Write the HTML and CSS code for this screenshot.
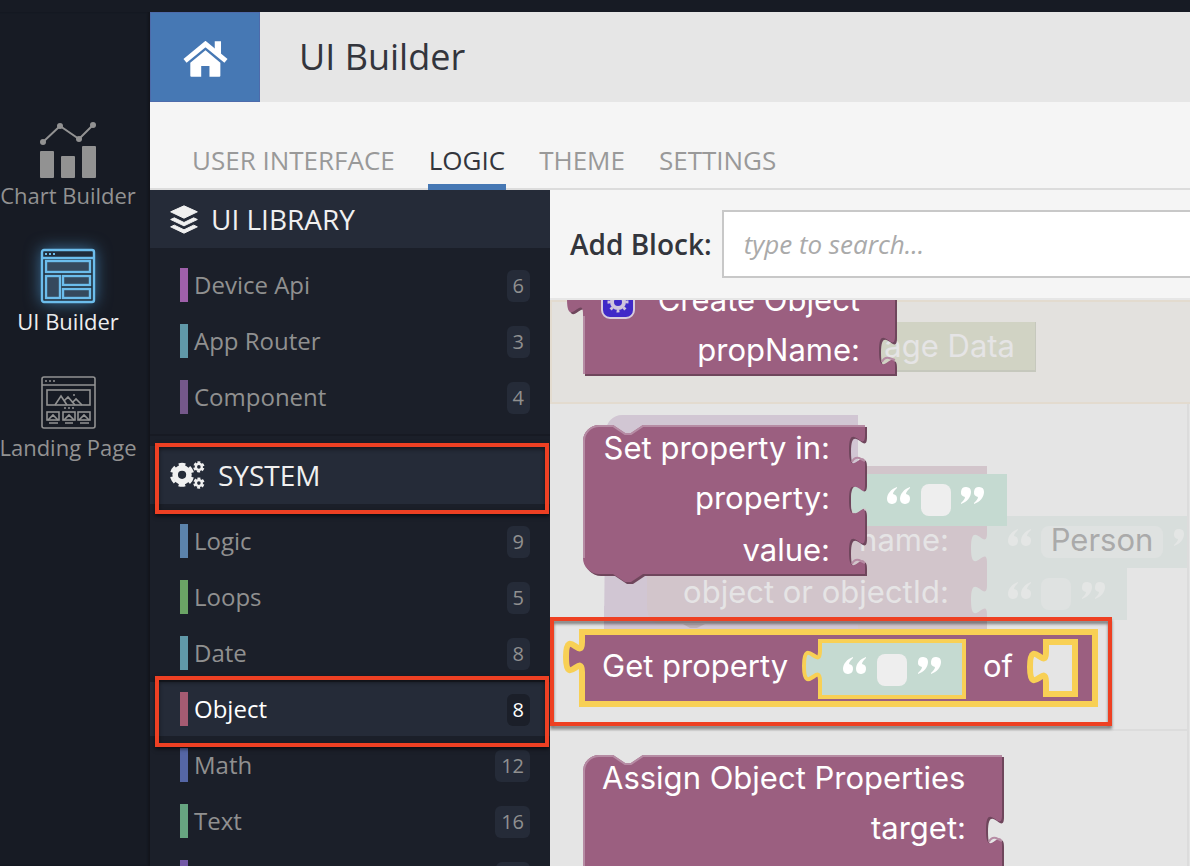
FILE: index.html
```html
<!DOCTYPE html>
<html lang="en">
<head>
<meta charset="utf-8">
<title>UI Builder</title>
<link rel="stylesheet" href="styles.css">
</head>
<body>
<div class="app">
  <nav class="rail" aria-label="Builders">
    <a class="rail-item" href="#chart">
      <svg class="rail-icon" viewBox="0 0 56 56" aria-hidden="true">
        <g fill="currentColor"><rect y="29" width="14" height="27" rx="1"/><rect x="21" y="34" width="14" height="22" rx="1"/><rect x="42" y="24" width="14" height="32" rx="1"/><circle cx="3" cy="20" r="3"/><circle cx="20" cy="4" r="3"/><circle cx="39" cy="17" r="3"/><circle cx="53" cy="3" r="3"/></g>
        <path d="M3 20 20 4 39 17 53 3" fill="none" stroke="currentColor" stroke-width="2"/>
      </svg>
      <span>Chart Builder</span>
    </a>
    <a class="rail-item is-active" href="#ui">
      <svg class="rail-icon" viewBox="0 0 56 56" aria-hidden="true">
        <g fill="#35495d" stroke="#6cbdec" stroke-width="2.4">
          <rect x="2" y="2" width="52" height="52" rx="2" fill="#202c3a"/>
          <path d="M2 10H54"/>
          <rect x="6" y="13" width="44" height="11"/><rect x="6" y="28" width="14" height="22"/><rect x="23" y="28" width="27" height="9"/><rect x="23" y="41" width="27" height="9"/>
        </g>
        <path d="M5 6h2m2 0h2m2 0h2" stroke="#6cbdec" stroke-width="2"/>
      </svg>
      <span>UI Builder</span>
    </a>
    <a class="rail-item" href="#landing">
      <svg class="rail-icon" viewBox="0 0 56 56" aria-hidden="true">
        <g fill="none" stroke="currentColor" stroke-width="1.6">
          <rect x="2" y="3" width="53" height="51" rx="2"/>
          <path d="M2 11H55M5 7h2m2 0h2m2 0h2M24 34h2m2 0h2m2 0h2"/>
          <rect x="7" y="16" width="43" height="15"/>
          <path d="M15 31l6-9 6 9M24 27l4-4 7 8M32 29l4-4 6 6M33 21h2"/>
          <rect x="7" y="38" width="12" height="8"/><rect x="23" y="38" width="12" height="8"/><rect x="38" y="38" width="12" height="8"/>
          <path d="M8 46l5-5 5 5M24 46l5-5 5 5M39 46l5-5 5 5M9 49h9M25 49h8M40 49h9"/>
        </g>
      </svg>
      <span>Landing Page</span>
    </a>
  </nav>

  <div class="main">
    <header class="topbar">
      <a class="home" href="#home" aria-label="Home">
        <svg class="home-icon" viewBox="546 122 136 109" aria-hidden="true">
          <path d="M552 182 614 131 676 182" fill="none" stroke="#fff" stroke-width="15"/>
          <path d="M642 123h19v40l-19-15zM614 150l45 38v39q0 3-3 3h-30v-32h-25v32h-30q-3 0-3-3v-39z" fill="#fff"/>
        </svg>
      </a>
      <h1 class="title">UI Builder</h1>
    </header>

    <nav class="tabs" aria-label="Sections">
      <a class="tab" href="#user-interface">USER INTERFACE</a>
      <a class="tab is-active" href="#logic">LOGIC</a>
      <a class="tab" href="#theme">THEME</a>
      <a class="tab" href="#settings">SETTINGS</a>
    </nav>

    <div class="body">
      <aside class="library">
        <section class="group">
          <h2 class="group-head">
            <svg class="layers" viewBox="510 615 84 86" aria-hidden="true"><g fill="#f0f0f0" stroke="#f0f0f0" stroke-width="3" stroke-linejoin="round"><path d="M552 617 592 635 552 654 512 635zM512 658 523 653 552 667 581 653 592 658 552 677zM512 680 523 675 552 689 581 675 592 680 552 699z"/></g></svg>
            UI LIBRARY
          </h2>
          <ul class="list">
            <li><a class="row violet" href="#device-api"><span class="name">Device Api</span><span class="count">6</span></a></li>
            <li><a class="row teal" href="#app-router"><span class="name">App Router</span><span class="count">3</span></a></li>
            <li><a class="row plum" href="#component"><span class="name">Component</span><span class="count">4</span></a></li>
          </ul>
        </section>
        <section class="group">
          <h2 class="group-head marked">
            <svg class="cogs" viewBox="60 94 105 85" aria-hidden="true">
              <g fill="none" stroke="#f0f0f0">
                <circle cx="96" cy="136" r="21" stroke-width="17"/><circle cx="96" cy="136" r="32" stroke-width="9" pathLength="60" stroke-dasharray="6 4" transform="rotate(-108 96 136)"/>
                <circle cx="147" cy="112" r="9" stroke-width="7"/><circle cx="147" cy="112" r="14" stroke-width="6" pathLength="60" stroke-dasharray="6 4" transform="rotate(-108 147 112)"/>
                <circle cx="147" cy="161" r="9" stroke-width="7"/><circle cx="147" cy="161" r="14" stroke-width="6" pathLength="60" stroke-dasharray="6 4" transform="rotate(-108 147 161)"/>
              </g>
            </svg>
            SYSTEM
          </h2>
          <ul class="list">
            <li><a class="row blue" href="#logic-blocks"><span class="name">Logic</span><span class="count">9</span></a></li>
            <li><a class="row green" href="#loops"><span class="name">Loops</span><span class="count">5</span></a></li>
            <li><a class="row teal" href="#date"><span class="name">Date</span><span class="count">8</span></a></li>
            <li><a class="row rose is-active marked" href="#object"><span class="name">Object</span><span class="count">8</span></a></li>
            <li><a class="row indigo" href="#math"><span class="name">Math</span><span class="count">12</span></a></li>
            <li><a class="row mint" href="#text"><span class="name">Text</span><span class="count">16</span></a></li>
            <li><div class="row purple"><span class="name"></span><span class="count"></span></div></li>
          </ul>
        </section>
      </aside>

      <main class="editor">
        <form class="search">
          <label class="search-label" for="block-search">Add Block:</label>
          <input class="search-input" id="block-search" type="text" placeholder="type to search...">
        </form>
        <div class="workspace">
          <svg class="canvas" role="img" aria-label="Block workspace">
            <defs>
              <g id="quote-open"><path d="M10 0C4 2 0 7 0 12a5 5 0 1 0 6-5C6 5 8 3 10 1zM23 0c-6 2-10 7-10 12a5 5 0 1 0 6-5c0-2 2-4 4-6z"/></g>
              <g id="quote-close"><path d="M1 17c6-2 10-7 10-12a5 5 0 1 0-6 5c0 2-2 4-4 6zM14 17c6-2 10-7 10-12a5 5 0 1 0-6 5c0 2-2 4-4 6z"/></g>
              <filter id="mark-shadow" x="-5%" y="-10%" width="110%" height="130%"><feDropShadow dx="0" dy="3" stdDeviation="1.5" flood-opacity="0.45"/></filter>
              <path id="create-shape" d="M583 274H895V336c0 20-16-16-16 15s16-5 16 15V374H583V314c0-20-16 16-16-15s16 5 16-15z"/>
              <path id="set-shape" d="M583 441a16 16 0 0 1 16-16H613l12 8h6l12-8H865v10c0 20-16-16-16 15s16-5 16 15V485c0 20-16-16-16 15s16-5 16 15V537c0 20-16-16-16 15s16-5 16 15v7H643l-12 8h-6l-12-8H599a16 16 0 0 1-16-16z"/>
              <path id="assign-shape" d="M583 771a16 16 0 0 1 16-16H613l12 8h6l12-8H1002V815c0 20-16-16-16 15s16-5 16 15V1000H583z"/>
            </defs>
            <g transform="translate(-550 -300)">
              <g class="faded">
                <rect x="551" y="301" width="100%" height="102" fill="#e3e1de" stroke="#e3dbcf" stroke-width="2"/>
                <rect x="870" y="322" width="166" height="50" fill="#c6c8bd"/>
                <rect x="870" y="322" width="165" height="48" fill="#d1d3c4"/>
                <path d="M606 431a16 16 0 0 1 16-16H858V632H604z" fill="#d1c6d3"/>
                <path d="M647 466H987V640H671q-24-2-24-34z" fill="#d2c5cb"/>
                <path d="M647 606q0 20 18 18H858V632H604V606z" fill="#d1c6d3"/>
                <path d="M647 580H987V624H663q-16-3-16-24z" fill="#d2c5cb"/>
                <path d="M683 624h22l-8 4h-7z" fill="#bcb0b6"/>
                <path d="M987 516H1187V568H1127V620H987V615c0-20-16 16-16-15s16 5 16-15V563c0-20-16 16-16-15s16 5 16-15z" fill="#d8dedc"/>
                <rect x="1041" y="526" width="122" height="32" rx="8" fill="#dfe2e1"/>
                <rect x="1041" y="578" width="30" height="32" rx="8" fill="#dfe2e1"/>
                <g fill="#e4e6e5"><use href="#quote-open" x="1008" y="529"/><use href="#quote-close" x="1173" y="529"/><use href="#quote-open" x="1008" y="582"/><use href="#quote-close" x="1081" y="582"/></g>
                <text x="1015" y="357" text-anchor="end">age Data</text>
                <text x="949" y="551" text-anchor="end">name:</text>
                <text x="949" y="603" text-anchor="end">object or objectId:</text>
                <text class="value" x="1102" y="551" text-anchor="middle">Person</text>
                <path d="M1188 404V900M550 730H1188" fill="none" stroke="#dcdcdc" stroke-width="2"/>
              </g>

              <g class="block">
                <use class="edge" href="#create-shape" x="2" y="2"/>
                <use href="#create-shape"/>
                <path class="shine" d="M584 374V316M882 362q2-5 7-4l6 2"/>
                <rect x="602" y="286" width="32" height="32" rx="8" fill="#4029c8" stroke="#d8ccdc" stroke-width="2"/>
                <g fill="none" stroke="#d0c4dc"><circle cx="618" cy="302" r="6" stroke-width="4"/><circle cx="618" cy="302" r="9" stroke-width="3" pathLength="80" stroke-dasharray="4 6" transform="rotate(-99 618 302)"/></g>
                <text x="860" y="311" text-anchor="end">Create Object</text>
                <text x="860" y="361" text-anchor="end">propName:</text>
              </g>

              <g class="block">
                <use class="edge" href="#set-shape" x="2" y="2"/>
                <use href="#set-shape"/>
                <path class="shine" d="M584 558V441a15 15 0 0 1 15-15H613l12 8h6l12-8H865M852 462q2-5 7-4l6 3M852 564q2-5 7-4l6 3"/>
                <path d="M867 474H1007V526H867V515c0-20-16 16-16-15s16 5 16-15z" fill="#c5dad1"/>
                <rect x="921" y="484" width="30" height="32" rx="8" fill="#eee"/>
                <use class="quote" href="#quote-open" x="887" y="487"/><use class="quote" href="#quote-close" x="960" y="487"/>
                <text x="830" y="459" text-anchor="end">Set property in:</text>
                <text x="830" y="509" text-anchor="end">property:</text>
                <text x="830" y="561" text-anchor="end">value:</text>
              </g>

              <rect class="mark" x="552" y="619" width="558" height="105" filter="url(#mark-shadow)"/>

              <g class="block">
                <path class="picked" d="M582 632H1095V704H582V672c0-20-16 16-16-15s16 5 16-15z"/>
                <path d="M820 641H964V697H820V681c0-20-16 16-16-15s16 5 16-15z" fill="#c5dad1" stroke="#f8d055" stroke-width="4"/>
                <path d="M1046 642H1075V694H1046V682c0-20-16 16-16-15s16 5 16-15z" fill="#e5e5e5" stroke="#f8d055" stroke-width="6"/>
                <rect x="877" y="654" width="30" height="32" rx="8" fill="#eee"/>
                <use class="quote" href="#quote-open" x="843" y="657"/><use class="quote" href="#quote-close" x="917" y="657"/>
                <text x="602" y="677">Get property</text>
                <text x="983" y="677">of</text>
              </g>

              <g class="block">
                <use class="edge" href="#assign-shape" x="2" y="2"/>
                <use href="#assign-shape"/>
                <path class="shine" d="M584 900V771a15 15 0 0 1 15-15H613l12 8h6l12-8H1002M989 842q2-5 7-4l6 3"/>
                <text x="602" y="789">Assign Object Properties</text>
                <text x="966" y="839" text-anchor="end">target:</text>
              </g>
            </g>
          </svg>
        </div>
      </main>
    </div>
  </div>
</div>
</body>
</html>
```

FILE: styles.css
```css
* { box-sizing: border-box; }

body {
  margin: 0;
  font-family: "Open Sans", "Noto Sans", sans-serif;
  color: #33353c;
  background: #171b24;
}

a { color: inherit; text-decoration: none; }

.app {
  display: flex;
  height: 100vh;
  overflow: hidden;
  padding-top: 12px;
}

.rail {
  flex: none;
  width: 150px;
  padding: 110px 14px 0 0;
  display: flex;
  flex-direction: column;
  gap: 38px;
  box-shadow: inset -2px 0 2px #12151c;
}

.rail-item {
  display: flex;
  flex-direction: column;
  align-items: center;
  gap: 2px;
  font-size: 22px;
  line-height: 30px;
  white-space: nowrap;
  color: #929292;
}

.rail-item.is-active { color: #eee; }
.rail-icon { width: 56px; height: 56px; }
.is-active .rail-icon { filter: drop-shadow(0 0 8px #3b6f98); }

.main {
  flex: 1;
  min-width: 0;
  display: flex;
  flex-direction: column;
  background: #f5f5f5;
}

.topbar {
  display: flex;
  align-items: center;
  height: 90px;
  background: #e6e6e6;
}

.home {
  display: flex;
  align-items: center;
  justify-content: center;
  width: 110px;
  height: 90px;
  padding-top: 4px;
  background: #4678b4;
  border: 1px solid #4d6bab;
}

.home-icon { width: 45px; height: 36px; }

.title {
  margin: 0 39px;
  font-size: 36px;
  line-height: 48px;
  font-weight: 400;
}

.tabs {
  flex: none;
  display: flex;
  align-items: flex-end;
  gap: 32px;
  height: 88px;
  padding-left: 41px;
  border-bottom: 2px solid #dcdcdc;
}

.tab {
  margin-bottom: -2px;
  padding: 0 1px 7px;
  border-bottom: 6px solid transparent;
  font-size: 26px;
  line-height: 34px;
  color: #999;
}

.tab.is-active { color: #33353c; border-color: #4678b4; }

.body { flex: 1; min-height: 0; display: flex; }

.library {
  flex: none;
  width: 400px;
  overflow: hidden;
  background: #1b1f29;
}

.group { margin-bottom: 10px; border-bottom: 2px solid #171a23; }

.group-head {
  display: flex;
  align-items: center;
  gap: 13px;
  height: 58px;
  margin: 0;
  padding-left: 20px;
  font-size: 28px;
  font-weight: 400;
  color: #f0f0f0;
  background: #252b38;
}

.layers { width: 28px; height: 29px; }
.cogs { width: 35px; height: 28px; }

.list { list-style: none; margin: 0; padding: 10px 0 8px; }

.row {
  display: flex;
  align-items: center;
  height: 54px;
  margin-bottom: 2px;
  padding: 0 20px 0 30px;
  color: #909090;
}

.name {
  flex: 1;
  height: 34px;
  padding-left: 6px;
  border-left: 8px solid var(--bar);
  font-size: 24px;
  line-height: 34px;
}

.count {
  height: 32px;
  padding: 0 6px;
  border-radius: 6px;
  font-size: 20px;
  line-height: 32px;
  margin-top: 2px;
  background: #252b38;
}

.count:empty { width: 34px; }

.row.is-active { color: #fff; background: #252b38; }
.is-active .count { background: #1b1f29; }

.violet { --bar: #9f60aa; }
.teal { --bar: #6098a8; }
.plum { --bar: #75588a; }
.blue { --bar: #5c83ab; }
.green { --bar: #6ba465; }
.rose { --bar: #a55b72; }
.indigo { --bar: #5566a5; }
.mint { --bar: #67a581; }
.purple { --bar: #7258a5; }

.marked { position: relative; }

.marked::after {
  content: "";
  position: absolute;
  inset: -3px 1px -10px 5px;
  border: 4px solid #ee4023;
  box-shadow: 0 2px 4px rgba(0, 0, 0, 0.6), inset 0 2px 4px rgba(0, 0, 0, 0.5);
}

.row.marked::after { inset: -6px 1px -11px 5px; }

.editor {
  flex: 1;
  min-width: 0;
  display: flex;
  flex-direction: column;
}

.search {
  display: flex;
  align-items: center;
  gap: 10px;
  padding: 20px 0 20px 20px;
  border-bottom: 2px solid #e6e6e6;
}

.search-label { font-size: 28px; font-weight: 600; white-space: nowrap; }

.search-input {
  flex: 1;
  min-width: 0;
  height: 68px;
  padding: 0 20px;
  border: 2px solid #c8c8c8;
  border-right: 0;
  font: italic 26px "Open Sans", "Noto Sans", sans-serif;
  background: #fff;
}

.search-input::placeholder { color: #aaa; opacity: 1; }

.workspace { flex: 1; min-height: 0; background: #e5e5e5; }

.canvas {
  display: block;
  width: 100%;
  height: 100%;
  overflow: hidden;
  font-family: Inter, "Liberation Sans", sans-serif;
  font-size: 31px;
}

.block { fill: #9b5f80; }
.block text { fill: #fff; }
.edge { fill: #6f465c; }
.shine { fill: none; stroke: #b68ca4; stroke-width: 2; }
.quote { fill: #fff; }
.picked { stroke: #f8d055; stroke-width: 6; }
.faded text { fill: #e5e4e5; }
.faded .value { fill: #aaa; }
.mark { fill: none; stroke: #ee4023; stroke-width: 4; }
```
